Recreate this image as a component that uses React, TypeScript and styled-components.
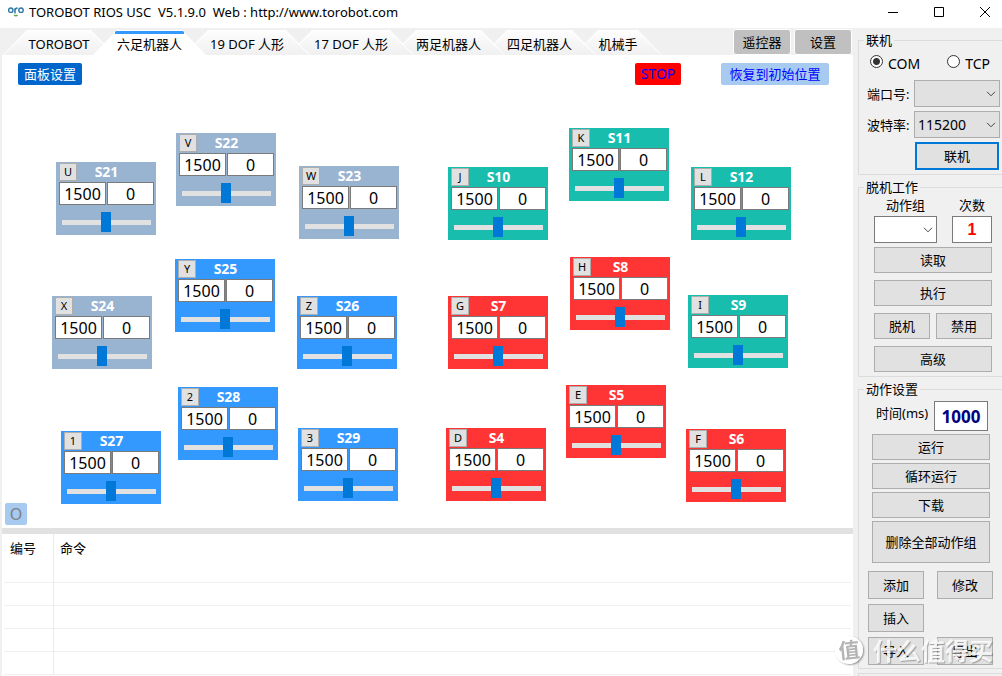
import React from "react";
import styled, { createGlobalStyle, css } from "styled-components";

const GlobalStyle = createGlobalStyle`
  *, *::before, *::after { box-sizing: border-box; }
  body {
    margin: 0;
    background: #f0f0f0;
    color: #000;
    font: 13px/16px "Noto Sans", "Noto Sans CJK SC", sans-serif;
  }
  button, input, select { font: inherit; color: inherit; margin: 0; padding: 0; border-radius: 0; }
`;

const Window = styled.div`
  display: flex;
  flex-direction: column;
  min-height: 100vh;
  overflow: hidden;
`;

const TitleBar = styled.header`
  display: flex;
  align-items: center;
  height: 28px;
  padding: 0 12px 4px 8px;
  background: #fff;
`;

const Title = styled.h1`
  flex: 1;
  margin: 0 0 0 5px;
  font-size: 13px;
  font-weight: 400;
  white-space: pre;
`;

const WindowControls = styled.div`
  display: flex;
  gap: 36px;
`;

const WindowButton = styled.button`
  display: flex;
  border: 0;
  background: none;
`;

const Body = styled.div`
  display: flex;
  flex: 1;
`;

const Main = styled.main`
  display: flex;
  flex: 1;
  flex-direction: column;
  min-width: 0;
  padding-left: 2px;
`;

const TabBar = styled.div`
  display: flex;
  align-items: flex-end;
  height: 27px;
`;

const Tabs = styled.div`
  display: flex;
  flex: 1;
  padding-left: 1px;
`;

const Tab = styled.button<{ $active?: boolean; $order: number; $width: number }>`
  position: relative;
  z-index: ${(p) => (p.$active ? 20 : p.$order)};
  flex: none;
  width: ${(p) => p.$width}px;
  height: 25px;
  padding: 2px 0 0;
  margin-right: -22px;
  border: 0;
  background: #fff;
  white-space: nowrap;
  clip-path: polygon(0 100%, 24px 0, calc(100% - 24px) 0, 100% 100%);

  &::before {
    content: "";
    position: absolute;
    inset: 1px 1px 0;
    z-index: -1;
    background: linear-gradient(#fdfdfd, #f0f0f0);
    clip-path: polygon(0 100%, 24px 0, calc(100% - 24px) 0, 100% 100%);
  }

  ${(p) =>
    p.$active &&
    css`
      &::before {
        inset: 1px 22px auto;
        height: 3px;
        background: #3399ff;
        clip-path: none;
      }
    `}
`;

const TabActions = styled.div`
  display: flex;
  align-items: center;
  gap: 3px;
  padding-right: 1px;
`;

const GreyButton = styled.button`
  width: 58px;
  height: 26px;
  border: 1px solid #fff;
  border-radius: 3px;
  background: #c0c0c0;
`;

const Board = styled.section`
  position: relative;
  display: flex;
  flex: 1;
  flex-direction: column;
  justify-content: space-between;
  min-height: 473px;
  padding: 8px 24px 3px 3px;
  background: #fff;
`;

const BoardTools = styled.div`
  display: flex;
  gap: 40px;
  padding-left: 13px;
`;

const FlatButton = styled.button<{ $bg: string; $fg: string; $width: number; $size?: number }>`
  width: ${(p) => p.$width}px;
  height: 22px;
  border: 0;
  border-radius: 2px;
  background: ${(p) => p.$bg};
  color: ${(p) => p.$fg};
  font-size: ${(p) => p.$size ?? 13}px;

  &:first-child:not(:only-child) { margin-right: auto; }
`;

const Card = styled.article<{ $x: number; $y: number; $color: string }>`
  position: absolute;
  left: ${(p) => p.$x}px;
  top: ${(p) => p.$y}px;
  display: grid;
  grid-template: 19px 23px 20px / 1fr 1fr;
  column-gap: 1px;
  width: 100px;
  height: 73px;
  padding: 1px 2px 0 3px;
  background: ${(p) => p.$color};
`;

const CardHead = styled.div`
  grid-column: 1 / -1;
  display: grid;
  grid-template-columns: 18px 1fr 18px;
`;

const KeyButton = styled.button`
  width: 18px;
  height: 18px;
  border: 1px solid #adadad;
  background: #e1e1e1;
  font-size: 11px;
  line-height: 16px;
`;

const ServoName = styled.h2`
  margin: 0;
  color: #fff;
  font-size: 14px;
  font-weight: 700;
  line-height: 18px;
  text-align: center;
`;

const ServoInput = styled.input`
  width: 100%;
  min-width: 0;
  height: 23px;
  border: 1px solid #7a7a7a;
  background: #fff;
  font-size: 16px;
  text-align: center;
`;

const ServoRange = styled.input`
  grid-column: 1 / -1;
  width: 90px;
  height: 20px;
  margin: 7px 0 0 2px;
  appearance: none;
  background: linear-gradient(#e1e1e1, #e1e1e1) 1px 8px / 100% 5px no-repeat;

  &::-webkit-slider-thumb {
    appearance: none;
    width: 10px;
    height: 20px;
    background: #0078d7;
  }
`;

const Splitter = styled.div`
  height: 6px;
  background: #e1e1e1;
`;

const TableArea = styled.section`
  padding: 0 2px 1px;
  background: #fff;
`;

const Table = styled.table`
  width: 100%;
  border-collapse: separate;
  border-spacing: 0;
  table-layout: fixed;

  th {
    height: 26px;
    padding: 2px 6px 0;
    font-weight: 400;
    text-align: left;
  }
  th:first-child { width: 50px; }
  td {
    height: 23px;
    padding: 0;
    border-bottom: 1px solid #f0f0f0;
  }
  th:first-child, td:first-child { border-right: 1px solid #ebebeb; }
`;

const Side = styled.aside`
  display: flex;
  flex-direction: column;
  gap: 4px;
  width: 149px;
  padding: 4px 0 0 5px;
`;

const Group = styled.fieldset`
  min-width: 0;
  margin: 0;
  padding: 0 2px 3px 8px;
  border: 1px solid #dcdcdc;
  border-right: 0;
`;

const Legend = styled.legend`
  height: 16px;
  margin-left: -3px;
  padding: 0 2px;
`;

const Stack = styled.div<{ $gap: number; $pad?: string }>`
  display: flex;
  flex-direction: column;
  gap: ${(p) => p.$gap}px;
  padding: ${(p) => p.$pad ?? "0"};
`;

const Pair = styled.div`
  display: flex;
  align-items: center;
  justify-content: space-between;
`;

const RadioRow = styled.div`
  display: flex;
  justify-content: space-between;
  padding: 6px 10px 6px 3px;
`;

const RadioLabel = styled.label`
  display: flex;
  gap: 5px;
  font-size: 14px;
  line-height: 20px;
`;

const Radio = styled.input`
  width: 13px;
  height: 13px;
  margin-top: 1px;
  appearance: none;
  border: 1px solid #333;
  border-radius: 50%;
  background: #fff;

  &:checked { background: radial-gradient(circle, #333 3px, #fff 4px); }
`;

const SelectBox = styled.span<{ $width: number }>`
  position: relative;
  display: flex;
  flex: none;
  width: ${(p) => p.$width}px;

  svg {
    position: absolute;
    right: 4px;
    top: 11px;
    pointer-events: none;
  }
`;

const Select = styled.select<{ $white?: boolean }>`
  width: 100%;
  height: 27px;
  padding-left: 3px;
  appearance: none;
  border: 1px solid ${(p) => (p.$white ? "#7a7a7a" : "#adadad")};
  background: ${(p) => (p.$white ? "#fff" : "#e1e1e1")};
  font-size: 14px;
`;

const Button = styled.button<{ $height?: number; $half?: boolean }>`
  width: ${(p) => (p.$half ? "56px" : "100%")};
  height: ${(p) => p.$height ?? 26}px;
  border: 1px solid #adadad;
  background: #e1e1e1;
`;

const ConnectButton = styled(Button)`
  align-self: flex-end;
  width: 84px;
  border: 2px solid #0078d7;
  margin-right: 1px;
`;

const Field = styled.label<{ $width: number }>`
  display: flex;
  flex-direction: column;
  gap: 3px;
  width: ${(p) => p.$width}px;
  text-align: center;
`;

const CountInput = styled.input`
  width: 100%;
  height: 27px;
  border: 1px solid #7a7a7a;
  background: #fff;
  color: #f00;
  font: 700 16px "Liberation Sans", sans-serif;
  text-align: center;
`;

const TimeInput = styled.input`
  width: 54px;
  height: 30px;
  border: 1px solid #7a7a7a;
  background: #fff;
  color: #000080;
  font-size: 17px;
  font-weight: 700;
  text-align: center;
`;

const TimeRow = styled.label`
  display: flex;
  justify-content: space-between;
  padding: 0 2px 0 4px;
  line-height: 24px;
  white-space: nowrap;
`;

const EmptyGroup = styled.div`
  flex: 1;
  border-top: 1px solid #dcdcdc;
  border-left: 1px solid #dcdcdc;
`;

const Watermark = styled.div`
  position: fixed;
  right: 9px;
  bottom: 11px;
  z-index: 30;
  display: flex;
  align-items: center;
  gap: 10px;
  color: rgba(255, 255, 255, 0.85);
  font: 700 24px/30px "Noto Sans CJK SC", sans-serif;
  text-shadow: 1px 1px 1px rgba(0, 0, 0, 0.3);
  pointer-events: none;
`;

const WatermarkBadge = styled.span`
  width: 28px;
  height: 28px;
  border-radius: 50%;
  background: rgba(255, 255, 255, 0.85);
  box-shadow: 1px 1px 2px rgba(0, 0, 0, 0.4);
  color: #b4b4b4;
  font-size: 21px;
  line-height: 26px;
  text-align: center;
  text-shadow: none;
  transform: rotate(-6deg);
`;

const STEEL = "#99b4d1";
const BLUE = "#3399ff";
const TEAL = "#19bdae";
const RED = "#ff3535";

const servos: [string, string, number, number, string][] = [
  ["S21", "U", 54, 107, STEEL],
  ["S22", "V", 174, 78, STEEL],
  ["S23", "W", 297, 111, STEEL],
  ["S10", "J", 446, 112, TEAL],
  ["S11", "K", 567, 73, TEAL],
  ["S12", "L", 689, 112, TEAL],
  ["S24", "X", 50, 241, STEEL],
  ["S25", "Y", 173, 204, BLUE],
  ["S26", "Z", 295, 241, BLUE],
  ["S7", "G", 446, 241, RED],
  ["S8", "H", 568, 202, RED],
  ["S9", "I", 686, 240, TEAL],
  ["S27", "1", 59, 376, BLUE],
  ["S28", "2", 176, 332, BLUE],
  ["S29", "3", 296, 373, BLUE],
  ["S4", "D", 444, 373, RED],
  ["S5", "E", 564, 330, RED],
  ["S6", "F", 684, 374, RED],
];

const tabs: [string, number][] = [
  ["TOROBOT", 112],
  ["六足机器人", 113],
  ["19 DOF 人形", 126],
  ["17 DOF 人形", 126],
  ["两足机器人", 113],
  ["四足机器人", 113],
  ["机械手", 88],
];

const Chevron = () => (
  <svg width="10" height="6" viewBox="0 0 10 6" fill="none" stroke="#444">
    <path d="M1 .8 5 4.8 9 .8" />
  </svg>
);

const Logo = () => (
  <svg width="16" height="12" viewBox="0 0 16 12" fill="none">
    <circle cx="2.8" cy="4.2" r="2.2" stroke="#2f78a8" strokeWidth="1.4" />
    <circle cx="13" cy="4.2" r="2.2" stroke="#2f78a8" strokeWidth="1.4" />
    <path d="M7 7.5V2.2M7 4.2Q7.2 2 9.6 2" stroke="#2f78a8" strokeWidth="1.5" />
    <path d="M6 9Q8 10.4 9.6 9" stroke="#5cab3c" strokeWidth="1.5" />
  </svg>
);

const Servo = ({ name, hotkey, x, y, color }: { name: string; hotkey: string; x: number; y: number; color: string }) => (
  <Card $x={x} $y={y} $color={color}>
    <CardHead>
      <KeyButton>{hotkey}</KeyButton>
      <ServoName>{name}</ServoName>
    </CardHead>
    <ServoInput aria-label={`${name} position`} defaultValue="1500" />
    <ServoInput aria-label={`${name} offset`} defaultValue="0" />
    <ServoRange aria-label={`${name} slider`} type="range" min={500} max={2500} defaultValue={1500} />
  </Card>
);

export default function App() {
  return (
    <Window>
      <GlobalStyle />
      <TitleBar>
        <Logo />
        <Title>{"TOROBOT RIOS USC  V5.1.9.0  Web : http://www.torobot.com"}</Title>
        <WindowControls>
          <WindowButton aria-label="Minimize">
            <svg width="10" height="10" stroke="#000"><path d="M0 5.5H10" /></svg>
          </WindowButton>
          <WindowButton aria-label="Maximize">
            <svg width="10" height="10" stroke="#000" fill="none"><path d="M.5.5h9v9h-9z" /></svg>
          </WindowButton>
          <WindowButton aria-label="Close">
            <svg width="10" height="10" stroke="#000"><path d="M0 0 10 10M10 0 0 10" /></svg>
          </WindowButton>
        </WindowControls>
      </TitleBar>
      <Body>
        <Main>
          <TabBar>
            <Tabs>
              {tabs.map(([label, width], i) => (
                <Tab key={label} $active={i === 1} $order={10 - i} $width={width}>{label}</Tab>
              ))}
            </Tabs>
            <TabActions>
              <GreyButton>遥控器</GreyButton>
              <GreyButton>设置</GreyButton>
            </TabActions>
          </TabBar>
          <Board>
            <BoardTools>
              <FlatButton $bg="#0066cc" $fg="#fff" $width={64}>面板设置</FlatButton>
              <FlatButton $bg="#ff0000" $fg="#0000ff" $width={46} $size={14}>STOP</FlatButton>
              <FlatButton $bg="#a6caf0" $fg="#0000ff" $width={108}>恢复到初始位置</FlatButton>
            </BoardTools>
            {servos.map(([name, key, x, y, color]) => (
              <Servo key={name} name={name} hotkey={key} x={x} y={y} color={color} />
            ))}
            <FlatButton $bg="#a6caf0" $fg="#808080" $width={22} $size={16}>O</FlatButton>
          </Board>
          <Splitter />
          <TableArea>
            <Table>
              <thead>
                <tr><th>编号</th><th>命令</th></tr>
              </thead>
              <tbody>
                {[0, 1, 2, 3, 4].map((r) => (
                  <tr key={r}><td /><td /></tr>
                ))}
              </tbody>
            </Table>
          </TableArea>
        </Main>
        <Side>
          <Group>
            <Legend>联机</Legend>
            <RadioRow>
              <RadioLabel><Radio type="radio" name="link" defaultChecked />COM</RadioLabel>
              <RadioLabel><Radio type="radio" name="link" />TCP</RadioLabel>
            </RadioRow>
            <Stack $gap={4} $pad="0 0 1px">
              <Pair>
                <label htmlFor="port">端口号:</label>
                <SelectBox $width={86}><Select id="port"><option></option></Select><Chevron /></SelectBox>
              </Pair>
              <Pair>
                <label htmlFor="baud">波特率:</label>
                <SelectBox $width={86}><Select id="baud"><option>115200</option></Select><Chevron /></SelectBox>
              </Pair>
              <ConnectButton $height={28}>联机</ConnectButton>
            </Stack>
          </Group>
          <Group>
            <Legend>脱机工作</Legend>
            <Stack $gap={4} $pad="2px 8px 1px 7px">
              <Pair>
                <Field $width={63}>
                  动作组
                  <SelectBox $width={63}><Select $white><option></option></Select><Chevron /></SelectBox>
                </Field>
                <Field $width={40}>
                  次数
                  <CountInput defaultValue="1" />
                </Field>
              </Pair>
              <Stack $gap={7}>
                <Button>读取</Button>
                <Button>执行</Button>
                <Pair>
                  <Button $half>脱机</Button>
                  <Button $half>禁用</Button>
                </Pair>
                <Button>高级</Button>
              </Stack>
            </Stack>
          </Group>
          <Group>
            <Legend>动作设置</Legend>
            <Stack $gap={3} $pad="4px 10px 8px 5px">
              <TimeRow>时间(ms)<TimeInput defaultValue="1000" /></TimeRow>
              <Button>运行</Button>
              <Button>循环运行</Button>
              <Button>下载</Button>
              <Button $height={42}>删除全部动作组</Button>
            </Stack>
            <Stack $gap={5} $pad="0 7px 0 1px">
              <Pair>
                <Button $half $height={28}>添加</Button>
                <Button $half $height={28}>修改</Button>
              </Pair>
              <Button $half $height={28}>插入</Button>
              <Pair>
                <Button $half $height={28}>导入</Button>
                <Button $half $height={28}>导出</Button>
              </Pair>
            </Stack>
          </Group>
          <EmptyGroup />
        </Side>
      </Body>
      <Watermark>
        <WatermarkBadge>值</WatermarkBadge>
        什么值得买
      </Watermark>
    </Window>
  );
}
